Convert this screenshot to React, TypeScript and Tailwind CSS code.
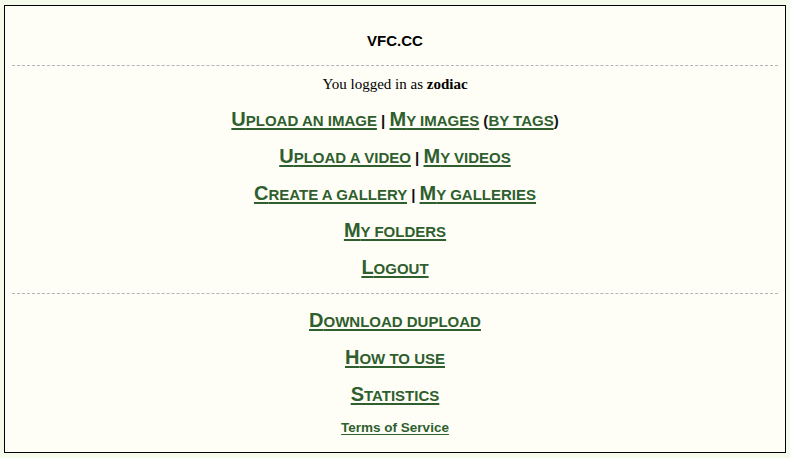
const link = "text-[#2f5e2f] underline decoration-2 underline-offset-[2px]";

// hand-made small caps: capitals large, the rest uppercased and smaller
function SmallCaps({ text }: { text: string }) {
    const parts: { big: boolean; s: string }[] = [];
    for (const ch of text) {
        const big = ch !== " " && ch === ch.toUpperCase() && ch !== ch.toLowerCase();
        const last = parts[parts.length - 1];
        if (last && last.big === big) last.s += ch;
        else parts.push({ big, s: ch });
    }
    return (
        <>
            {parts.map((p, i) => (
                <span key={i} className={p.big ? "text-[20px] leading-none" : "text-[15px] leading-none uppercase"}>
                    {p.s}
                </span>
            ))}
        </>
    );
}

function Sep({ children }: { children: string }) {
    return <span className="text-[15px] leading-none text-[#111]">{children}</span>;
}

function Row({ children }: { children: React.ReactNode }) {
    return (
        <div className="h-[37px] leading-[37px] text-[20px] font-bold text-center whitespace-pre">
            {children}
        </div>
    );
}

export default function App() {
    return (
        <div className="w-[790px] h-[458px] bg-[#f4fbea] pt-[5px] px-[4px]">
            <div className="w-[782px] h-[448px] border border-black bg-[#fefef6] px-[7px] flex flex-col items-center font-['Liberation_Sans',Arial,sans-serif]">

                {/* Title */}
                <div className="mt-[25px] h-[20px] leading-[20px] text-[15px] font-bold text-black">
                    VFC.CC
                </div>

                <div className="mt-[14px] w-full border-t border-dashed border-[#b4b4bc]" />

                {/* Account */}
                <div className="mt-[8px] h-[20px] text-[15px] leading-[20px] text-black font-['Liberation_Serif','Times_New_Roman',serif]">
                    You logged in as <b>zodiac</b>
                </div>

                <div className="mt-[7px] flex flex-col items-center">
                    <Row>
                        <a href="#" className={link}><SmallCaps text="Upload an image" /></a>
                        <Sep>{" | "}</Sep>
                        <a href="#" className={link}><SmallCaps text="My images" /></a>
                        <Sep>{" ("}</Sep>
                        <a href="#" className={link}><SmallCaps text="by tags" /></a>
                        <Sep>)</Sep>
                    </Row>
                    <Row>
                        <a href="#" className={link}><SmallCaps text="Upload a video" /></a>
                        <Sep>{" | "}</Sep>
                        <a href="#" className={link}><SmallCaps text="My videos" /></a>
                    </Row>
                    <Row>
                        <a href="#" className={link}><SmallCaps text="Create a gallery" /></a>
                        <Sep>{" | "}</Sep>
                        <a href="#" className={link}><SmallCaps text="My galleries" /></a>
                    </Row>
                    <Row>
                        <a href="#" className={link}><SmallCaps text="My folders" /></a>
                    </Row>
                    <Row>
                        <a href="#" className={link}><SmallCaps text="Logout" /></a>
                    </Row>
                </div>

                <div className="mt-[7px] w-full border-t border-dashed border-[#b4b4bc]" />

                <div className="mt-[8px] flex flex-col items-center">
                    <Row>
                        <a href="#" className={link}><SmallCaps text="Download dupload" /></a>
                    </Row>
                    <Row>
                        <a href="#" className={link}><SmallCaps text="How to use" /></a>
                    </Row>
                    <Row>
                        <a href="#" className={link}><SmallCaps text="Statistics" /></a>
                    </Row>
                </div>

                <div className="mt-[5px] h-[20px] leading-[20px] text-[13.5px] font-bold">
                    <a href="#" className="text-[#2f5e2f] underline decoration-1 underline-offset-[2px]">Terms of Service</a>
                </div>
            </div>
        </div>
    );
}
